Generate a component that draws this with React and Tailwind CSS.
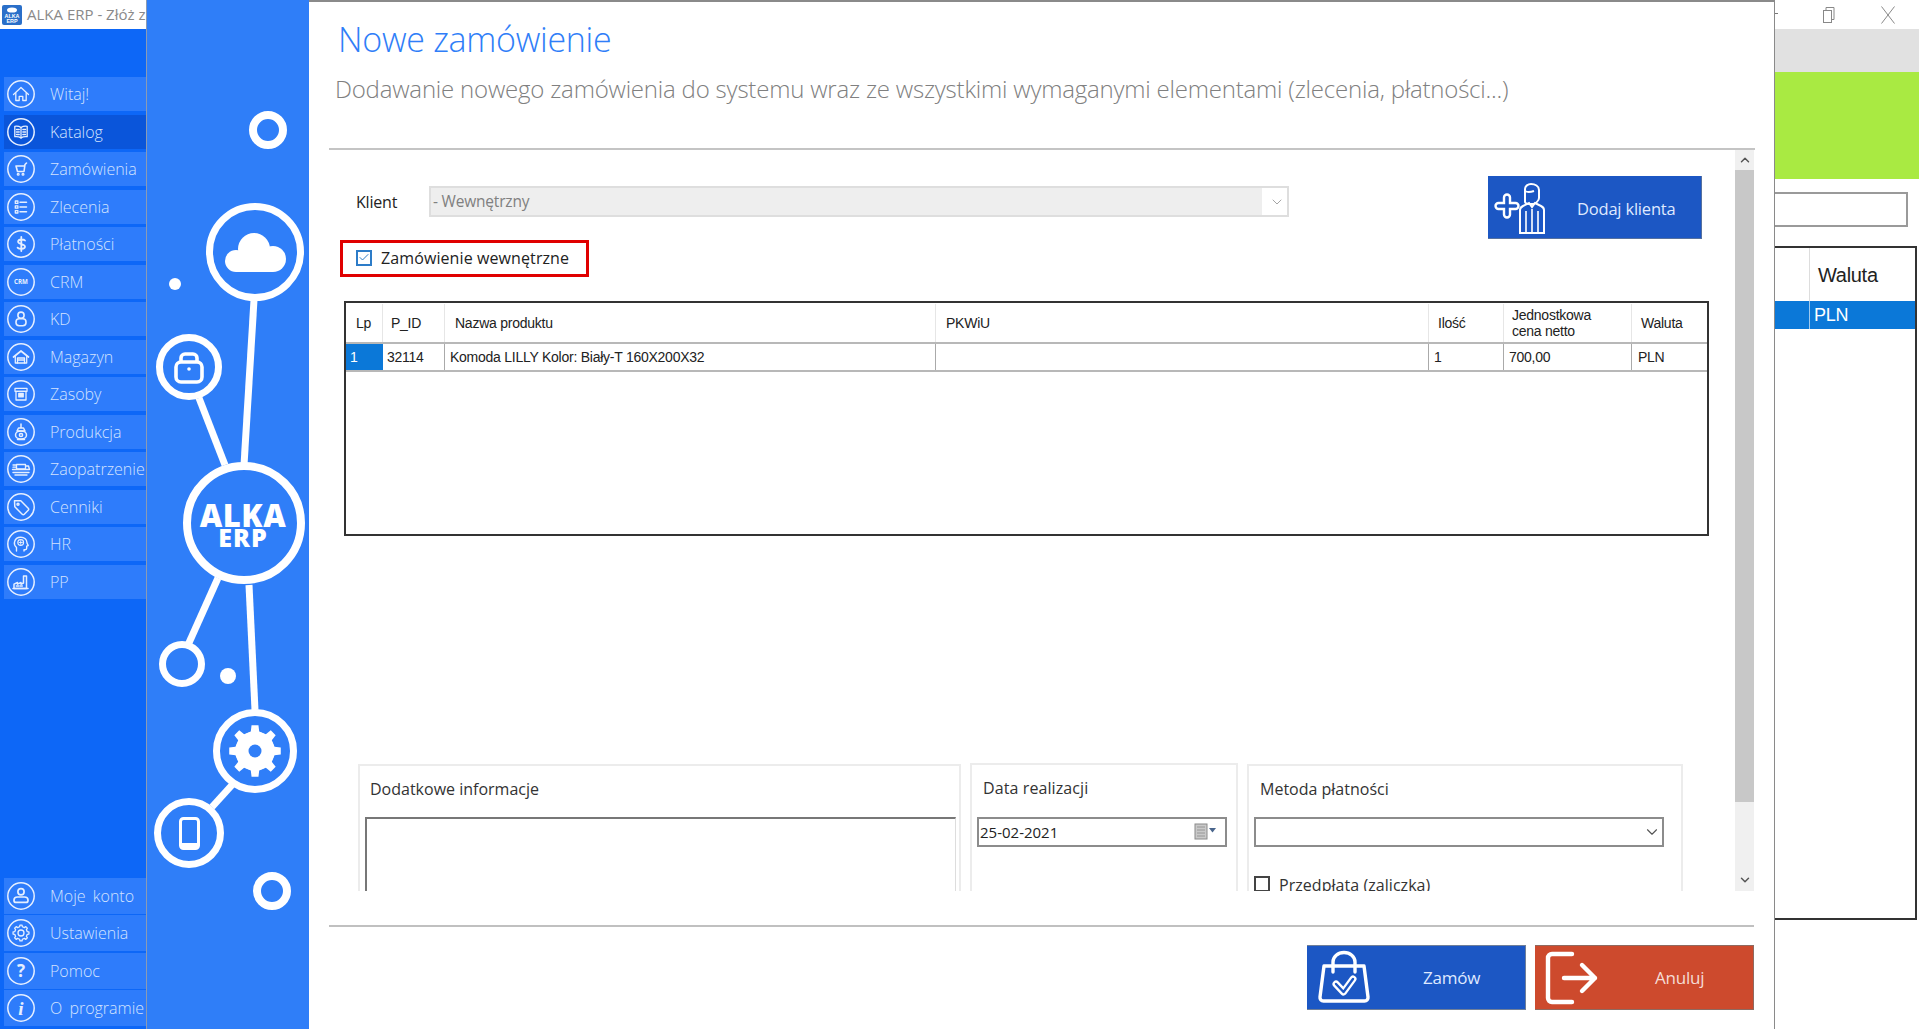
import React from "react";
import { ChevronUp, ChevronDown, Check } from "lucide-react";

function gearPath(cx, cy, r1, r2, teeth) {
  const pts = [];
  const step = (Math.PI * 2) / teeth;
  for (let i = 0; i < teeth; i++) {
    const a = i * step - Math.PI / 2;
    const w = step * 0.2;
    const p = [
      [r1, a - w * 1.35],
      [r2, a - w * 0.85],
      [r2, a + w * 0.85],
      [r1, a + w * 1.35],
    ];
    p.forEach(([r, t]) => pts.push(`${(cx + r * Math.cos(t)).toFixed(2)},${(cy + r * Math.sin(t)).toFixed(2)}`));
  }
  return "M" + pts.join("L") + "Z";
}

const S = { fill: "none", stroke: "#e6efff", strokeWidth: 1.3, strokeLinecap: "round", strokeLinejoin: "round" };

const railIcons = {
  home: <g {...S}><path d="M6.5 14.5 14 7.5l7.5 7" /><path d="M8.8 13v7.5h3.4v-4.2h3.6v4.2h3.4V13" /></g>,
  book: <g {...S}><path d="M14 9.5c-1.8-1.2-4-1.5-6.2-1.2v10.4c2.2-.3 4.4 0 6.2 1.2 1.8-1.2 4-1.5 6.2-1.2V8.3c-2.2-.3-4.4 0-6.2 1.2z" /><path d="M14 9.5V20M9.5 11.5h2.8M9.5 14h2.8M9.5 16.5h2.8M15.8 11.5h2.8M15.8 14h2.8M15.8 16.5h2.8" /></g>,
  cart: <g {...S}><path d="M19.5 8 18 9.5l-1 7H10.5L9 11h8.4" strokeWidth="1.6" /><circle cx="11.2" cy="19.2" r=".9" /><circle cx="16" cy="19.2" r=".9" /></g>,
  list: <g {...S}><rect x="8.3" y="8" width="2.6" height="2.4" /><rect x="8.3" y="12.8" width="2.6" height="2.4" /><rect x="8.3" y="17.6" width="2.6" height="2.4" /><path d="M13 9.2h6.5M13 14h6.5M13 18.8h6.5" strokeWidth="1.5" /></g>,
  dollar: <g {...S} strokeWidth="1.8"><path d="M18 10.5c-1.2-1.3-6.6-1.7-6.9 1.1-.3 3.1 7 1.9 6.9 5.1-.1 2.6-5.6 2.5-7.4 1M14.3 7v14" /></g>,
  crm: <text x="14" y="16.2" textAnchor="middle" fontSize="6.2" fontWeight="700" fill="#e6efff" fontFamily="Open Sans, sans-serif">CRM</text>,
  user: <g {...S} strokeWidth="1.6"><circle cx="14" cy="10.2" r="3.1" /><rect x="9" y="13.8" width="10" height="7" rx="3.2" /></g>,
  warehouse: <g {...S}><path d="M6.5 14 14 8l7.5 6" strokeWidth="1.7" /><path d="M8.3 13.5V20h11.4v-6.5" /><path d="M10.5 20v-5h7v5M10.5 17h7" /></g>,
  box: <g {...S}><rect x="8" y="8.3" width="12" height="3" /><rect x="9" y="11.3" width="10" height="8.7" /><rect x="11.8" y="13.5" width="4.4" height="3.4" fill="#e6efff" /></g>,
  prod: <g {...S} strokeWidth="1.5"><path d="M14 6v4M11.5 10h5l1.5 3h-8z" /><ellipse cx="14" cy="17" rx="5.5" ry="4" /><circle cx="14" cy="17" r="1.6" /><path d="M10.5 21.5h7" /></g>,
  truck: <g {...S}><rect x="9.5" y="9.5" width="9" height="4.5" /><path d="M5.5 14.5h17M6 17.5h16M8 20h12M19 11h2.5l1 3.5" strokeWidth="1.4" /><path d="M6 12.2h3.5M6 10h3.5" /></g>,
  tag: <g {...S} strokeWidth="1.5"><path d="M7.5 7.8h6.3l7.4 7.4a1.5 1.5 0 0 1 0 2.1l-3.9 3.9a1.5 1.5 0 0 1-2.1 0l-7.4-7.4z" /><circle cx="11" cy="11.3" r="1" /></g>,
  hr: <g {...S} strokeWidth="1.4"><path d="M9.5 21v-3.5C7.8 16 7 14.2 7.5 12c.6-3 3.2-4.8 6.3-4.8 3.5 0 6.2 2.4 6.2 5.6 0 .8.9 2 1.2 2.7l-1.5.6v2.2c0 .9-.8 1.4-1.6 1.4H17V21" /><circle cx="13.7" cy="12.5" r="2.9" strokeWidth="1.1" /><path d="M12 12.5h3.4M13.7 10.8v3.4" strokeWidth=".9" /></g>,
  pp: <g {...S} strokeWidth="1.5"><path d="M7 20.5v-4.3l3.5-1.7v1.7l3.5-1.7v1.7l2.5-1.2V8h3v12.5z" /><path d="M9.3 18h2.3M13 18h2.3" /><path d="M6 20.5h15" /></g>,
  account: <g {...S} strokeWidth="1.7"><circle cx="14" cy="9.8" r="3.1" /><path d="M10.5 15h7c2.3 0 3.5 1.5 3.5 3v.4c0 1.2-1 2-2 2H9c-1 0-2-.8-2-2V18c0-1.5 1.2-3 3.5-3z" /></g>,
  settings: <g {...S}><path d={gearPath(14, 14, 6.4, 8, 8)} /><circle cx="14" cy="14" r="3" /></g>,
  help: <text x="14" y="20" textAnchor="middle" fontSize="17" fontWeight="700" fill="#e6efff" fontFamily="Open Sans, sans-serif">?</text>,
  info: <text x="14" y="21" textAnchor="middle" fontSize="19" fontWeight="800" fontStyle="italic" fill="#e6efff" fontFamily="Liberation Serif, serif">i</text>,
};

const topNav = [
  ["Witaj!", "home"], ["Katalog", "book", true], ["Zamówienia", "cart"], ["Zlecenia", "list"], ["Płatności", "dollar"],
  ["CRM", "crm"], ["KD", "user"], ["Magazyn", "warehouse"], ["Zasoby", "box"], ["Produkcja", "prod"],
  ["Zaopatrzenie", "truck"], ["Cenniki", "tag"], ["HR", "hr"], ["PP", "pp"],
];
const bottomNav = [["Moje konto", "account"], ["Ustawienia", "settings"], ["Pomoc", "help"], ["O programie", "info"]];

function RailIcon({ name }) {
  return (
    <svg width="28" height="28" viewBox="0 0 28 28" className="shrink-0">
      <circle cx="14" cy="14" r="13.2" fill="none" stroke="#e6efff" strokeWidth="1.5" />
      {railIcons[name]}
    </svg>
  );
}

function NavRow({ label, icon, active, tall }) {
  return (
    <div className={`flex items-center gap-[15px] pl-[3px] ml-[4px] whitespace-nowrap overflow-hidden ${tall ? "h-[36px]" : "h-[34px]"} ${active ? "bg-[#0a55da]" : "bg-[#2e7cfb]"}`}>
      <RailIcon name={icon} />
      <span className="text-[16px] font-light text-[#d3e3ff] [word-spacing:3px]">{label}</span>
    </div>
  );
}

function LeftRail() {
  return (
    <div className="w-[146px] h-full shrink-0 flex flex-col bg-[#0d67f7]">
      <div className="h-[29px] bg-white flex items-center pl-[2px] gap-[5px] overflow-hidden whitespace-nowrap">
        <svg width="20" height="20" viewBox="0 0 20 20" className="shrink-0">
          <rect width="20" height="20" rx="2" fill="#2a6fc9" />
          <ellipse cx="10" cy="5" rx="5" ry="2.6" fill="#fff" />
          <text x="10" y="12.5" textAnchor="middle" fontSize="5.4" fontWeight="700" fill="#fff" fontFamily="Liberation Sans, sans-serif">ALKA</text>
          <text x="10" y="18" textAnchor="middle" fontSize="5.4" fontWeight="700" fill="#fff" fontFamily="Liberation Sans, sans-serif">ERP</text>
        </svg>
        <span className="text-[15px] text-[#8a8a8a]">ALKA ERP - Złóż zamówienie</span>
      </div>
      <div className="mt-[48px] flex flex-col gap-[3.5px]">
        {topNav.map(([l, i, a]) => <NavRow key={l} label={l} icon={i} active={a} />)}
      </div>
      <div className="mt-auto mb-[3px] flex flex-col gap-[1.5px]">
        {bottomNav.map(([l, i]) => <NavRow key={l} label={l} icon={i} tall />)}
      </div>
    </div>
  );
}

function Splash() {
  const W = "#ffffff";
  const ring = (cx, cy, r, sw) => <circle cx={cx} cy={cy} r={r} fill="none" stroke={W} strokeWidth={sw} />;
  const line = (x1, y1, x2, y2) => <line x1={x1} y1={y1} x2={x2} y2={y2} stroke={W} strokeWidth="7" />;
  return (
    <div className="w-[163px] h-full shrink-0 bg-[#2f7ef8] border-l border-[#8b9bb4]">
      <svg width="162" height="1029" viewBox="147 0 162 1029" className="block">
        {line(254, 300, 244, 465)}
        {line(199, 398, 225, 465)}
        {line(218, 578, 188, 645)}
        {line(249, 585, 255, 710)}
        {line(232, 785, 212, 807)}
        {ring(268, 130, 15, 8)}
        {ring(255, 252, 45.5, 7)}
        <circle cx="175" cy="284" r="6" fill={W} />
        <circle cx="236" cy="261" r="11" fill={W} />
        <circle cx="254" cy="249" r="16" fill={W} />
        <circle cx="273" cy="259" r="13" fill={W} />
        <rect x="236" y="258" width="37" height="14" fill={W} />
        {ring(189, 367, 29.5, 7)}
        <rect x="176" y="362" width="26" height="20" rx="5" fill="none" stroke={W} strokeWidth="3.6" />
        <path d="M181 362v-4a4 4 0 0 1 4-4h8a4 4 0 0 1 4 4v4" fill="none" stroke={W} strokeWidth="3.6" />
        <circle cx="189" cy="369" r="1.8" fill={W} />
        {ring(244, 523, 57, 8)}
        <text x="243" y="527" textAnchor="middle" fontSize="31" fontWeight="800" fill={W} fontFamily="Open Sans, sans-serif" letterSpacing="0.5">ALKA</text>
        <text x="243" y="547" textAnchor="middle" fontSize="25" fontWeight="800" fill={W} fontFamily="Open Sans, sans-serif" letterSpacing="1">ERP</text>
        {ring(182, 664, 19.5, 7)}
        <circle cx="228" cy="676" r="8" fill={W} />
        {ring(255, 751, 38.5, 7)}
        <path d={gearPath(255, 751, 20, 26, 8)} fill={W} />
        <circle cx="255" cy="751" r="19.5" fill={W} />
        <circle cx="255" cy="751" r="6.5" fill="#2f7ef8" />
        {ring(189, 833, 31.5, 7)}
        <rect x="180.5" y="818.5" width="18" height="30" rx="3" fill="none" stroke={W} strokeWidth="3" />
        <rect x="181" y="843" width="17" height="5" fill={W} />
        {ring(272, 891, 15, 8)}
      </svg>
    </div>
  );
}

const TH = "flex items-center text-[14px] leading-[16px] tracking-[-0.25px] text-[#222] border-r border-[#e6e6e6] [font-family:'Liberation_Sans',sans-serif]";
const TD = "flex items-center text-[14px] tracking-[-0.25px] text-[#222] border-r border-[#aaa] [font-family:'Liberation_Sans',sans-serif]";
const COLS = "grid grid-cols-[37px_62px_491px_493px_75px_128px_75px]";

function OrderTable() {
  return (
    <div className="ml-[15px] mt-[24px] w-[1365px] h-[235px] border-2 border-[#333] bg-white">
      <div className={`${COLS} h-[41px] pt-[1px] border-b-2 border-[#b8b8b8] box-border`}>
        <div className={`${TH} pl-[10px]`}>Lp</div>
        <div className={`${TH} pl-[8px]`}>P_ID</div>
        <div className={`${TH} pl-[10px]`}>Nazwa produktu</div>
        <div className={`${TH} pl-[10px]`}>PKWiU</div>
        <div className={`${TH} pl-[9px]`}>Ilość</div>
        <div className={`${TH} pl-[8px]`}>Jednostkowa<br />cena netto</div>
        <div className={`${TH} pl-[9px] border-r-0`}>Waluta</div>
      </div>
      <div className={`${COLS} h-[28px] border-b-2 border-[#b8b8b8] box-border`}>
        <div className={`${TD} pl-[4px] bg-[#0b78d8] text-white border-r-0`}>1</div>
        <div className={`${TD} pl-[4px]`}>32114</div>
        <div className={`${TD} pl-[5px]`}>Komoda LILLY Kolor: Biały-T 160X200X32</div>
        <div className={TD}></div>
        <div className={`${TD} pl-[5px]`}>1</div>
        <div className={`${TD} pl-[5px]`}>700,00</div>
        <div className={`${TD} pl-[6px] border-r-0`}>PLN</div>
      </div>
    </div>
  );
}

function BottomPanels() {
  const panel = "border-2 border-[#ececec] h-[200px] shrink-0";
  const label = "text-[16px] text-[#333] leading-[24px]";
  return (
    <div className="ml-[29px] mt-[228px] flex gap-[9px] items-start">
      <div className={`${panel} w-[603px] pt-[11px] pl-[5px] pr-[3px]`}>
        <div className={`${label} pl-[5px]`}>Dodatkowe informacje</div>
        <div className="mt-[16px] h-[100px] border-t-2 border-l-2 border-r border-[#777] border-r-[#ddd]" />
      </div>
      <div className={`${panel} w-[268px] pt-[11px] px-[5px] -mt-[1px]`}>
        <div className={`${label} pl-[6px] tracking-[0.1px]`}>Data realizacji</div>
        <div className="mt-[17px] w-[250px] h-[30px] border-2 border-[#8c8c8c] flex items-center justify-between pl-[1px] pr-[9px]">
          <span className="text-[15px] text-[#222]">25-02-2021</span>
          <span className="flex items-center gap-[2px]">
            <svg width="22" height="18" viewBox="0 0 22 18">
              <rect x="1" y="1" width="12" height="15" fill="#c9c9c9" stroke="#8a8a8a" strokeWidth="1" />
              <path d="M3 4h8M3 7h8M3 10h8M3 13h8" stroke="#8a8a8a" strokeWidth=".8" />
              <path d="M15 5h7l-3.5 4.5z" fill="#49658c" />
            </svg>
          </span>
        </div>
      </div>
      <div className={`${panel} w-[436px] pt-[11px] px-[5px]`}>
        <div className={`${label} pl-[6px]`}>Metoda płatności</div>
        <div className="mt-[16px] w-[410px] h-[30px] border-2 border-[#8c8c8c] flex items-center justify-end pr-[1px]">
          <ChevronDown size={18} className="text-[#555]" strokeWidth={1.5} />
        </div>
        <div className="mt-[29px] flex items-start gap-[9px]">
          <div className="w-[16px] h-[16px] border-2 border-[#444] shrink-0" />
          <span className="text-[16px] text-[#333] leading-[24px] tracking-[0.05px] -mt-[3px]">Przedpłata (zaliczka)</span>
        </div>
      </div>
    </div>
  );
}

function Dialog() {
  return (
    <div className="w-[1465px] h-full shrink-0 bg-white border-t-2 border-[#8a8a8a] flex flex-col pl-[20px] pr-[20px]">
      <div className="h-[148px] shrink-0 border-b-2 border-[#c4c4c4] -mr-px">
        <h1 className="mt-[13px] ml-[9px] text-[34px] leading-[48px] font-light text-[#2f7ef8] tracking-[-0.28px]">Nowe zamówienie</h1>
        <p className="mt-[10px] ml-[6px] text-[24px] leading-[32px] font-light text-[#808080] tracking-[-0.2px] whitespace-nowrap">Dodawanie nowego zamówienia do systemu wraz ze wszystkimi wymaganymi elementami (zlecenia, płatności...)</p>
      </div>
      <div className="h-[741px] shrink-0 flex">
        <div className="w-[1406px] h-full overflow-hidden shrink-0">
          <div className="flex h-[89px] pt-[26px] pl-[27px]">
            <div className="w-[73px] mt-[10px] h-[31px] flex items-center text-[16px] text-[#222] tracking-[-0.2px]">Klient</div>
            <div className="w-[860px] mt-[10px] h-[31px] border-2 border-[#dedede] flex items-center pr-[1px] bg-white">
              <div className="flex-1 h-full bg-[#eeeeee] flex items-center pl-[2px] text-[15.5px] text-[#808080] tracking-[-0.2px]">- Wewnętrzny</div>
              <div className="w-[24px] flex justify-center pl-[5px]"><ChevronDown size={16} className="text-[#a5a5a5]" strokeWidth={1.5} /></div>
            </div>
            <button className="ml-[199px] w-[214px] h-[63px] bg-[#1c57c4] border-b border-r border-[#56719f] flex items-center">
              <svg width="60" height="63" viewBox="0 0 60 63" className="shrink-0" fill="none" stroke="#fff" strokeWidth="2">
                <path d="M14 22.5a3 3 0 0 1 6 0v5.5h5.5a3 3 0 0 1 0 6H20v5.5a3 3 0 0 1-6 0V34H8.5a3 3 0 0 1 0-6H14z" transform="translate(2 -1)" strokeWidth="2.4" />
                <path d="M37 26V13c0-3 3-5 6-5 4 0 8 2 8 6v8c0 3-4 6-6 6h-4c-2 0-4-1-4-2z" />
                <path d="M37 15c3 2 6 1 9 0" />
                <path d="M32 57V34c0-2 1-3 3-4l6-3 3 4 3-4 6 3c2 1 3 2 3 4v23z" />
                <path d="M38 57V35M44 57V33M50 57V35" strokeWidth="1.6" />
              </svg>
              <span className="ml-[29px] pt-[4px] text-[16.5px] text-[#dfe9ff] tracking-[-0.2px]">Dodaj klienta</span>
            </button>
          </div>
          <div className="ml-[11px] mt-[1px] w-[249px] h-[37px] border-[3px] border-[#e00000] flex items-center pl-[13px] gap-[9px]">
            <div className="w-[16px] h-[16px] border-2 border-[#2d7cc8] flex items-center justify-center shrink-0 -mt-[2px]">
              <Check size={15} className="text-[#2d7cc8]" strokeWidth={2} />
            </div>
            <span className="text-[16px] text-[#222] tracking-[0.1px] whitespace-nowrap -mt-[2px]">Zamówienie wewnętrzne</span>
          </div>
          <OrderTable />
          <BottomPanels />
        </div>
        <div className="w-[19px] h-full shrink-0 bg-[#f0f0f0] flex flex-col">
          <div className="h-[20px] flex items-center justify-center"><ChevronUp size={14} strokeWidth={2.5} className="text-[#555]" /></div>
          <div className="h-[632px] bg-[#c8c8c8]" />
          <div className="mt-auto h-[22px] flex items-center justify-center"><ChevronDown size={14} strokeWidth={2.5} className="text-[#555]" /></div>
        </div>
      </div>
      <div className="mt-[34px] h-[2px] bg-[#c0c0c0] shrink-0" />
      <div className="mt-[18px] flex justify-end gap-[9px]">
        <button className="w-[219px] h-[65px] bg-[#1c57c4] border-b border-r border-t border-[#6f7f99] flex items-center">
          <svg width="70" height="65" viewBox="0 0 70 65" className="shrink-0 ml-[2px]" fill="none" stroke="#fff" strokeWidth="3.4" strokeLinecap="round" strokeLinejoin="round">
            <path d="M15 21H55L59 52a3.5 3.5 0 0 1-3.5 4H14.5a3.5 3.5 0 0 1-3.5-4z" />
            <path d="M24 27V17a11 9.5 0 0 1 22 0V27" />
            <path d="M27 39l7.5 8L44 34" strokeWidth="7" />
            <path d="M27 39l7.5 8L44 34" strokeWidth="2.4" stroke="#1c57c4" />
          </svg>
          <span className="ml-[44px] text-[17px] text-[#dfe9ff] tracking-[-0.2px]">Zamów</span>
        </button>
        <button className="w-[219px] h-[65px] bg-[#cd4a2d] border-b border-r border-t border-[#8f6a60] flex items-center">
          <svg width="70" height="65" viewBox="0 0 70 65" className="shrink-0" fill="none" stroke="#fff" strokeWidth="4.4" strokeLinecap="round" strokeLinejoin="round">
            <path d="M37 9H17a4 4 0 0 0-4 4V53a4 4 0 0 0 4 4H37" />
            <path d="M29 33H60M47 20L60 33L47 46" />
          </svg>
          <span className="ml-[50px] text-[17px] text-[#f5dcd5] tracking-[-0.2px]">Anuluj</span>
        </button>
      </div>
    </div>
  );
}

function RightWindow() {
  return (
    <div className="flex-1 h-full border-l border-[#8a8a8a] flex flex-col bg-white overflow-hidden">
      <div className="h-[29px] shrink-0 flex items-center justify-between text-[#777]">
        <div className="w-[3px] h-px bg-[#777] mt-[-2px]" />
        <div className="flex items-center gap-[46px] pr-[24px]">
          <svg width="12" height="16" viewBox="0 0 12 16" fill="none" stroke="#888" strokeWidth="1"><rect x=".5" y="3.5" width="8" height="12" /><path d="M3 3.5V.5h8v12H8.5" /></svg>
          <svg width="14" height="18" viewBox="0 0 14 18" fill="none" stroke="#888" strokeWidth="1"><path d="M.5 .5 13.5 17.5M13.5 .5.5 17.5" /></svg>
        </div>
      </div>
      <div className="h-[43px] shrink-0 bg-[#e1e1e1]" />
      <div className="h-[107px] shrink-0 bg-[#a9ea42]" />
      <div className="mt-[13px] w-[133px] h-[35px] shrink-0 border-2 border-l-0 border-[#9a9a9a]" />
      <div className="mt-[19px] w-[142px] h-[674px] shrink-0 border-2 border-l-0 border-[#333]">
        <div className="h-[53px] flex">
          <div className="w-[35px] border-r border-[#ddd]" />
          <div className="pl-[8px] flex items-center text-[20px] tracking-[-0.3px] text-[#222] [font-family:'Liberation_Sans',sans-serif]">Waluta</div>
        </div>
        <div className="h-[28px] bg-[#0b78d8] flex">
          <div className="w-[35px] border-r border-[#9fc9ee]" />
          <div className="pl-[4px] flex items-center text-[18px] tracking-[-0.3px] text-white [font-family:'Liberation_Sans',sans-serif]">PLN</div>
        </div>
      </div>
    </div>
  );
}

export default function App() {
  return (
    <div className="w-[1919px] h-[1029px] flex overflow-hidden bg-white [font-family:'Open_Sans',sans-serif]">
      <LeftRail />
      <Splash />
      <Dialog />
      <RightWindow />
    </div>
  );
}
